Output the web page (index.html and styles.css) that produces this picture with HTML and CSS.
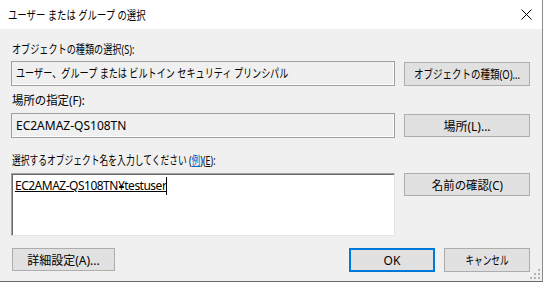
FILE: index.html
```html
<!DOCTYPE html>
<html lang="ja">
<head>
    <meta charset="UTF-8">
    <title>ユーザー または グループ の選択</title>
    <link rel="stylesheet" href="styles.css">
</head>
<body>
    <div class="window">
        <header class="titlebar">
            <span class="narrow n78">ユーザー または グループ の選択</span>
            <svg class="close" width="11" height="11" viewBox="0 0 11 11">
                <path d="M0.5 0.5 L10.5 10.5 M10.5 0.5 L0.5 10.5" stroke="#000" stroke-width="1" fill="none"/>
            </svg>
        </header>
        <section class="content">
            <div class="label label--first"><span class="narrow n76">オブジェクトの種類の選択(S):</span></div>
            <div class="row">
                <div class="box box--readonly"><span class="narrow n76">ユーザー、グループ または ビルトイン セキュリティ プリンシパル</span></div>
                <button class="btn btn--side"><span class="narrow mid n79">オブジェクトの種類(O)...</span></button>
            </div>

            <div class="label label--second"><span class="narrow n95">場所の指定(F):</span></div>
            <div class="row">
                <div class="box box--readonly box--short">EC2AMAZ-QS108TN</div>
                <button class="btn btn--side btn--short">場所(L)...</button>
            </div>

            <div class="label label--third"><span class="narrow n73">選択するオブジェクト名を入力してください (<a class="link">例</a>)(<u>E</u>):</span></div>
            <div class="row row--top">
                <div class="box box--edit"><span class="entry">EC2AMAZ-QS108TN¥testuser</span><span class="caret"></span></div>
                <button class="btn btn--side btn--short"><span class="narrow mid n95">名前の確認(C)</span></button>
            </div>

            <footer class="footer">
                <button class="btn btn--adv">詳細設定(A)...</button>
                <div class="footer__right">
                    <button class="btn btn--ok">OK</button>
                    <button class="btn btn--cancel"><span class="narrow mid n72">キャンセル</span></button>
                </div>
            </footer>
        </section>
        <svg class="grip" width="10" height="10" viewBox="0 0 10 10">
            <rect x="8" y="0" width="2" height="2" fill="#b5b5b5"/>
            <rect x="4" y="4" width="2" height="2" fill="#b5b5b5"/>
            <rect x="8" y="4" width="2" height="2" fill="#b5b5b5"/>
            <rect x="0" y="8" width="2" height="2" fill="#b5b5b5"/>
            <rect x="4" y="8" width="2" height="2" fill="#b5b5b5"/>
            <rect x="8" y="8" width="2" height="2" fill="#b5b5b5"/>
        </svg>
    </div>
</body>
</html>
```

FILE: styles.css
```css
* {
    margin: 0;
    padding: 0;
    box-sizing: border-box;
}
body {
    background-color: #fff;
    font-family: "Noto Sans", "Noto Sans CJK JP", sans-serif;
    font-size: 12px;
    color: #000;
    width: 544px;
    height: 285px;
    overflow: hidden;
}
.window {
    position: relative;
    width: 543px;
    height: 282px;
    display: flex;
    flex-direction: column;
    border-right: 1px solid #8a8a8a;
    border-bottom: 1px solid #6a6a6a;
}
.titlebar {     /* 제목 표시줄 */
    height: 29px;
    background-color: #fff;
    display: flex;
    align-items: center;
    justify-content: space-between;
    padding: 0 10px 0 8px;
}
.close {
    display: block;
}
/* 가나 글자가 좁은 UI 글꼴 흉내 */
.narrow {
    display: inline-block;
    white-space: nowrap;
    transform-origin: 0 50%;
}
.narrow.mid {
    transform-origin: 50% 50%;
}
.n72 { transform: scaleX(0.72); }
.n73 { transform: scaleX(0.73); }
.n76 { transform: scaleX(0.76); }
.n78 { transform: scaleX(0.78); }
.n79 { transform: scaleX(0.79); }
.n95 { transform: scaleX(0.95); }
.content {
    flex: 1;
    background-color: #f0f0f0;
    padding: 0 12px 0 11px;
}
.label {
    height: 16px;
    line-height: 16px;
    padding-left: 1px;
    white-space: nowrap;
}
.label--first {
    margin-top: 13px;
    margin-bottom: 3px;
}
.label--second {
    margin-top: 7px;
    margin-bottom: 4px;
}
.label--third {
    margin-top: 15px;
    margin-bottom: 4px;
}
.link {
    color: #0066cc;
    text-decoration: underline;
}
.row {
    display: grid;
    grid-template-columns: 384px 126px;
    column-gap: 9px;
    align-items: start;
}
.box {
    height: 25px;
    line-height: 23px;
    padding-left: 4px;
    white-space: nowrap;
    overflow: hidden;
}
.box--readonly {
    background-color: #f0f0f0;
    border: 1px solid #a0a0a0;
    box-shadow: inset -1px -1px 0 #fff;
}
.box--edit {
    height: 63px;
    background-color: #fff;
    border: 1px solid;
    border-color: #a0a0a0 #e3e3e3 #e3e3e3 #a0a0a0;
    box-shadow: inset 1px 1px 0 #696969;
    padding-left: 3px;
    line-height: 24px;
    display: flex;
    align-items: flex-start;
}
.entry {
    text-decoration: underline;
    letter-spacing: -0.5px;
}
.caret {
    display: inline-block;
    width: 1px;
    height: 18px;
    background-color: #000;
    margin-top: 3px;
}
.btn {
    font-family: inherit;
    font-size: 12px;
    color: #000;
    background-color: #e1e1e1;
    border: 1px solid #adadad;
    height: 24px;
    padding: 0;
    white-space: nowrap;
    display: flex;
    align-items: center;
    justify-content: center;
}
.btn--side {
    margin-top: 1px;
}
.btn--short {
    height: 23px;
}
.row--top .btn--side {
    margin-top: 0;
}
.footer {
    display: flex;
    justify-content: space-between;
    margin-top: 12px;
    padding-left: 1px;
}
.footer__right {
    display: flex;
    gap: 9px;
}
.btn--adv {
    width: 103px;
    height: 23px;
}
.btn--ok {
    width: 86px;
    border: 2px solid #0078d7;
}
.btn--cancel {
    width: 86px;
}
.grip {     /* 크기 조절 손잡이 */
    position: absolute;
    right: 2px;
    bottom: 2px;
}
```
